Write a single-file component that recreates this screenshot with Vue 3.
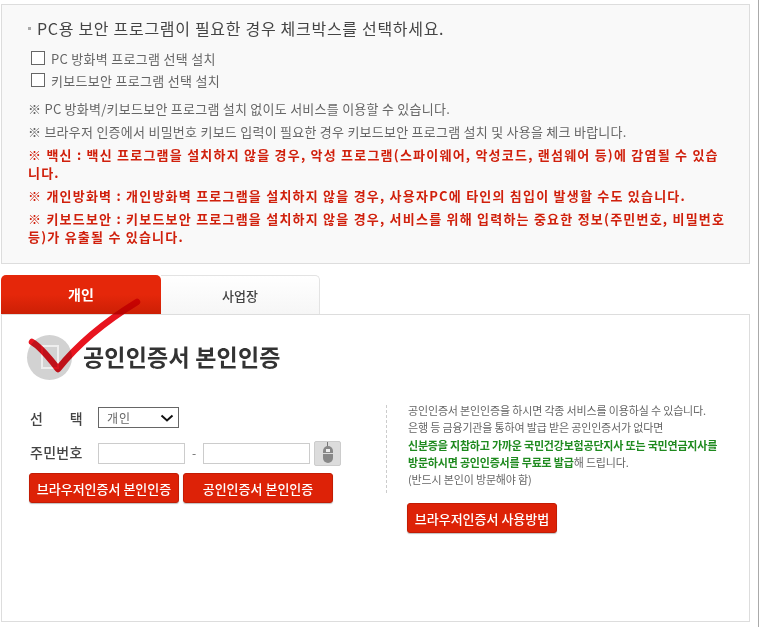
<template>
  <div class="page">
    <section class="notice">
      <h2 class="notice-title"><span class="dot"></span>PC용 보안 프로그램이 필요한 경우 체크박스를 선택하세요.</h2>
      <div class="checks">
        <label v-for="item in programs" :key="item" class="check-row">
          <span class="check-box"></span>{{ item }}
        </label>
      </div>
      <p v-for="line in infoLines" :key="line" class="info">{{ line }}</p>
      <p v-for="line in warnings" :key="line" class="warn">{{ line }}</p>
    </section>

    <div class="tabs">
      <div class="tab active">개인</div>
      <div class="tab">사업장</div>
    </div>

    <section class="panel">
      <div class="heading">
        <div class="heading-icon"><span></span></div>
        <h1>공인인증서 본인인증</h1>
      </div>

      <div class="columns">
        <div class="form">
          <div class="form-row first">
            <span class="label spread"><i>선</i><i>택</i></span>
            <div class="select">개인
              <svg width="14" height="8" viewBox="0 0 14 8"><path d="M1.5 1.5 7 6.5l5.5-5" fill="none" stroke="#111" stroke-width="2"/></svg>
            </div>
          </div>
          <div class="form-row id-row">
            <span class="label">주민번호</span>
            <div class="input short"></div>
            <span class="dash">-</span>
            <div class="input long"></div>
            <div class="mouse">
              <svg width="25" height="23" viewBox="0 0 25 23">
                <path d="M12.5 0v5" stroke="#777" fill="none"/>
                <rect x="8" y="4" width="10" height="17" rx="5" fill="#888"/>
                <rect x="11" y="7" width="4" height="3" fill="#eee"/>
                <path d="M8 11.5h10" stroke="#ddd"/>
              </svg>
            </div>
          </div>
          <div class="buttons">
            <button class="red-btn wide">브라우저인증서 본인인증</button>
            <button class="red-btn wide">공인인증서 본인인증</button>
          </div>
        </div>

        <div class="side">
          <div class="side-text">
            <p>공인인증서 본인인증을 하시면 각종 서비스를 이용하실 수 있습니다.</p>
            <p>은행 등 금융기관을 통하여 발급 받은 공인인증서가 없다면</p>
            <p><b>신분증을 지참하고 가까운 국민건강보험공단지사 또는 국민연금지사를</b></p>
            <p><b>방문하시면 공인인증서를 무료로 발급</b>해 드립니다.</p>
            <p>(반드시 본인이 방문해야 함)</p>
          </div>
          <button class="red-btn guide">브라우저인증서 사용방법</button>
        </div>
      </div>
    </section>

    <svg class="tick" width="120" height="90" viewBox="0 0 120 90">
      <path d="M4 44C13 49 23 62 30 71 49 47 78 23 109 4" fill="none" stroke="#e8141f" stroke-width="6.5" stroke-linecap="round" stroke-linejoin="round"/>
    </svg>
  </div>
</template>

<script setup>
const programs = ['PC 방화벽 프로그램 선택 설치', '키보드보안 프로그램 선택 설치']

const infoLines = [
  '※ PC 방화벽/키보드보안 프로그램 설치 없이도 서비스를 이용할 수 있습니다.',
  '※ 브라우저 인증에서 비밀번호 키보드 입력이 필요한 경우 키보드보안 프로그램 설치 및 사용을 체크 바랍니다.'
]

const warnings = [
  '※ 백신 : 백신 프로그램을 설치하지 않을 경우, 악성 프로그램(스파이웨어, 악성코드, 랜섬웨어 등)에 감염될 수 있습니다.',
  '※ 개인방화벽 : 개인방화벽 프로그램을 설치하지 않을 경우, 사용자PC에 타인의 침입이 발생할 수도 있습니다.',
  '※ 키보드보안 : 키보드보안 프로그램을 설치하지 않을 경우, 서비스를 위해 입력하는 중요한 정보(주민번호, 비밀번호 등)가 유출될 수 있습니다.'
]
</script>

<style>
html, body {
  background: #fff;
  overflow: hidden;
}
</style>

<style scoped>
.page {
  position: relative;
  width: 759px;
  height: 627px;
  padding: 4px 8px 0 1px;
  box-sizing: border-box;
  border-right: 1px solid #aaa;
  font-family: "Noto Sans CJK KR", "Noto Sans", sans-serif;
  color: #444;
}

p, h1, h2 {
  margin: 0;
}

.notice {
  height: 260px;
  box-sizing: border-box;
  padding: 12px 22px 0 26px;
  background: #f9f9f9;
  border: 1px solid #ddd;
}

.notice-title {
  display: flex;
  align-items: center;
  font-size: 16px;
  font-weight: 400;
  letter-spacing: 0.7px;
  line-height: 22px;
  color: #444;
}

.dot {
  width: 3px;
  height: 3px;
  margin-right: 6px;
  background: #aaa;
}

.checks {
  margin: 8px 0 9px 3px;
}

.check-row {
  display: flex;
  align-items: center;
  height: 22px;
  font-size: 13px;
  letter-spacing: 0.3px;
  color: #666;
}

.check-box {
  width: 12px;
  height: 12px;
  margin-right: 6px;
  background: #fff;
  border: 1px solid #666;
}

.info {
  margin-bottom: 5px;
  font-size: 13px;
  line-height: 18px;
  letter-spacing: 0.25px;
  color: #666;
}

.warn {
  margin-bottom: 5px;
  font-size: 13px;
  line-height: 18px;
  font-weight: 700;
  letter-spacing: 1.22px;
  word-break: break-all;
  color: #d0200c;
}

.tabs {
  display: flex;
  margin-top: 11px;
  height: 39px;
}

.tab {
  width: 158px;
  line-height: 39px;
  text-align: center;
  font-size: 13px;
  font-weight: 500;
  color: #444;
  background: linear-gradient(#fff, #f6f6f6);
  border: 1px solid #e3e3e3;
  border-bottom: 0;
  border-left: 0;
  border-radius: 0 5px 0 0;
}

.tab.active {
  width: 160px;
  color: #fff;
  font-size: 14px;
  font-weight: 700;
  background: linear-gradient(#e5270a 50%, #cc1f05);
  border: 0;
  border-radius: 5px 5px 0 0;
}

.panel {
  height: 308px;
  box-sizing: border-box;
  padding: 10px 0 0 25px;
  border: 1px solid #ddd;
}

.heading {
  display: flex;
  align-items: center;
  gap: 11px;
  height: 64px;
}

.heading-icon {
  display: flex;
  align-items: center;
  justify-content: center;
  width: 45px;
  height: 45px;
  border-radius: 50%;
  background: #d2d2d2;
}

.heading-icon span {
  width: 14px;
  height: 20px;
  border: 2px solid #eee;
}

.heading h1 {
  margin-bottom: 2px;
  font-size: 23px;
  font-weight: 700;
  letter-spacing: 0.2px;
  color: #333;
}

.columns {
  display: flex;
  margin-top: 8px;
}

.form {
  width: 359px;
  padding: 10px 0 0 3px;
  box-sizing: border-box;
}

.form-row {
  display: flex;
  align-items: center;
  height: 25px;
  margin-bottom: 7px;
}

.form-row.first {
  height: 21px;
  margin-bottom: 13px;
}

.label {
  width: 68px;
  font-size: 14px;
  font-weight: 500;
  letter-spacing: 0.3px;
  color: #444;
}

.label.spread {
  display: flex;
  justify-content: space-between;
  width: 53px;
  margin-right: 15px;
}

.label i {
  font-style: normal;
}

.id-row .label,
.id-row .dash {
  margin-bottom: 3px;
}

.select {
  display: flex;
  align-items: center;
  justify-content: space-between;
  width: 81px;
  height: 21px;
  box-sizing: border-box;
  padding: 0 4px 0 8px;
  background: #fff;
  border: 1px solid #666;
  font-size: 12px;
  letter-spacing: 1px;
  color: #666;
}

.input {
  height: 21px;
  box-sizing: border-box;
  background: #fff;
  border: 1px solid #ccc;
}

.input.short { width: 87px; }
.input.long { width: 107px; }

.dash {
  width: 18px;
  text-align: center;
  font-size: 12px;
  color: #666;
}

.mouse {
  width: 27px;
  height: 25px;
  margin-left: 4px;
  background: #dcdcdc;
  border: 1px solid #ccc;
  border-radius: 2px;
  box-sizing: border-box;
}

.buttons {
  display: flex;
  gap: 4px;
  margin-left: -1px;
}

.red-btn {
  height: 30px;
  padding: 0;
  background: #dd2207;
  border: 1px solid #c31c04;
  border-radius: 3px;
  box-shadow: 0 1px 1px rgba(0, 0, 0, 0.25);
  color: #fff;
  font-family: inherit;
  font-size: 13px;
  font-weight: 500;
}

.red-btn.wide { width: 150px; }

.side {
  margin-top: 8px;
}

.side-text {
  display: flow-root;
  padding: 0 0 0 21px;
  border-left: 1px dashed #ccc;
  height: 88px;
  font-size: 11px;
  line-height: 17.25px;
  letter-spacing: -0.16px;
  color: #666;
}

.side-text p:first-child {
  margin-top: -3px;
}

.side-text b {
  color: #1f8a1f;
  font-weight: 700;
  letter-spacing: -0.2px;
}

.guide {
  width: 150px;
  margin: 10px 0 0 21px;
}

.tick {
  position: absolute;
  left: 28px;
  top: 298px;
  mix-blend-mode: multiply;
}
</style>
